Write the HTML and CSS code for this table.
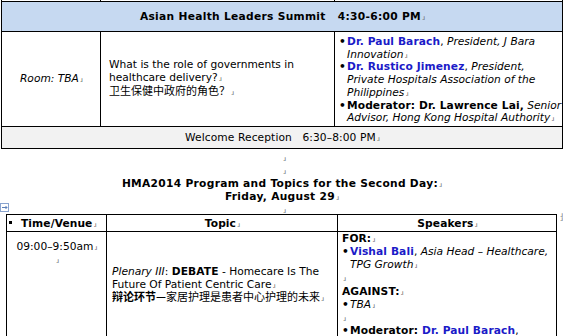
FILE: index.html
```html
<!DOCTYPE html>
<html>
<head>
<meta charset="utf-8">
<link rel="stylesheet" href="styles.css">
</head>
<body>
<div class="page">
  <table class="t1">
    <colgroup><col class="a1"><col class="a2"><col class="a3"></colgroup>
    <tr class="stub"><td></td><td></td><td></td></tr>
    <tr class="head"><td colspan="3">Asian Health Leaders Summit&nbsp;&nbsp; 4:30-6:00 PM<span class="pm">.ı</span></td></tr>
    <tr class="r2">
      <td class="room"><i>Room: TBA</i><span class="pm">.ı</span></td>
      <td class="q">What is the role of governments in<br>healthcare delivery?<span class="pm">.ı</span><br><span class="cjk">卫生保健中政府的角色？</span><span class="pm">.ı</span></td>
      <td class="spk">
        <div class="li"><span class="bul">•</span><span><b class="lnk">Dr. Paul Barach</b>, <i>President, J Bara<br>Innovation</i><span class="pm">.ı</span></span></div>
        <div class="li"><span class="bul">•</span><span><b class="lnk">Dr. Rustico Jimenez</b>, <i>President,<br>Private Hospitals Association of the<br>Philippines</i><span class="pm">.ı</span></span></div>
        <div class="li"><span class="bul">•</span><span><b>Moderator: Dr. Lawrence Lai,</b> <i>Senior<br>Advisor, Hong Kong Hospital Authority</i><span class="pm">.ı</span></span></div>
      </td>
    </tr>
    <tr class="welcome"><td colspan="3">Welcome Reception&nbsp;&nbsp; 6:30–8:00 PM<span class="pm">.ı</span></td></tr>
  </table>

  <div class="mid">
    <p><span class="pm">.ı</span></p>
    <p><span class="pm">.ı</span></p>
    <p><b>HMA2014 Program and Topics for the Second Day:</b><span class="pm">.ı</span></p>
    <p><b>Friday, August 29</b><span class="pm">.ı</span></p>
    <p><span class="pm">.ı</span></p>
  </div>

  <div class="t2wrap">
    <svg class="handle" width="9" height="9" viewBox="0 0 9 9">
      <rect x="0.5" y="0.5" width="8" height="8" fill="#fff" stroke="#8aa4cf"/>
      <path d="M2 4.5H7M5.5 3L7 4.5L5.5 6" fill="none" stroke="#5c7fb8" stroke-width="1"/>
    </svg>
    <div class="t2row">
      <table class="t2">
        <colgroup><col class="b1"><col class="b2"><col class="b3"></colgroup>
        <tr class="h2">
          <td class="tv"><span class="sq"></span><b>Time/Venue</b><span class="pm">.ı</span></td>
          <td class="ctr"><b>Topic</b><span class="pm">.ı</span></td>
          <td class="ctr"><b>Speakers</b><span class="pm">.ı</span></td>
        </tr>
        <tr class="r3">
          <td class="time">09:00–9:50am<span class="pm">.ı</span><br><span class="pm">.ı</span></td>
          <td class="deb"><i>Plenary III</i>: <b>DEBATE</b> - Homecare Is The<br>Future Of Patient Centric Care<span class="pm">.ı</span><br><span class="cjk"><b>辩论环节—</b>家居护理是患者中心护理的未来</span><span class="pm">.ı</span></td>
          <td class="spk2">
            <div><b>FOR:</b><span class="pm">.ı</span></div>
            <div class="li"><span class="bul">•</span><span><b class="lnk">Vishal Bali</b>, <i>Asia Head – Healthcare,<br>TPG Growth</i><span class="pm">.ı</span></span></div>
            <div class="gap1"><span class="pm">.ı</span></div>
            <div><b>AGAINST:</b><span class="pm">.ı</span></div>
            <div class="li"><span class="bul">•</span><span><i>TBA</i><span class="pm">.ı</span></span></div>
            <div class="gap2"><span class="pm">.ı</span></div>
            <div class="li"><span class="bul">•</span><span><b>Moderator: <span class="lnk">Dr. Paul Barach</span></b>,</span></div>
          </td>
        </tr>
      </table>
      <div class="rowmarks"><span class="pm">.ı</span><span class="pm">.ı</span></div>
    </div>
  </div>
</div>
</body>
</html>
```

FILE: styles.css
```css
* { box-sizing: border-box; }
html, body { margin: 0; padding: 0; background: #fff; }
body {
  font-family: "DejaVu Sans", Verdana, "Noto Sans CJK SC", sans-serif;
  font-size: 10.67px;
  color: #000;
  overflow: hidden;
  width: 563px;
  height: 336px;
}
.page { width: 563px; }
table { border-collapse: collapse; table-layout: fixed; }
td { border: 1px solid #000; padding: 0; vertical-align: top; }
b { letter-spacing: 0.1px; }
.head b, .head td, .mid b { letter-spacing: 0.3px; }
.cjk { font-family: "Noto Sans CJK SC", sans-serif; font-size: 11px; line-height: 1; letter-spacing: 0; }
.cjk b { letter-spacing: 0; }
.pm { font-size: 7px; line-height: 0; color: #666; letter-spacing: -1px; margin-left: 1px; font-weight: normal; font-style: normal; }
.lnk { color: #1b1bc8; }
.li { display: flex; }
.bul { width: 8px; flex: none; font-weight: bold; }

/* top table */
.t1 { margin: -10px 0 0 1px; width: 561px; }
.a1 { width: 99px; }
.a2 { width: 234px; }
.a3 { width: 228px; }
.stub td { height: 11px; }
.head td { height: 30px; background: #c6d9f1; text-align: center; vertical-align: middle; font-weight: bold; }
.r2 td { height: 95px; line-height: 12.7px; }
.room { text-align: center; vertical-align: middle !important; }
.q { vertical-align: middle !important; padding-left: 8px !important; }
.spk { padding: 4px 0 0 4px !important; white-space: nowrap; }
.welcome td { height: 22px; background: #f2f2f2; text-align: center; vertical-align: middle; letter-spacing: 0.1px; }

/* middle paragraphs */
.mid { padding-top: 2px; text-align: center; line-height: 13px; }
.mid p { margin: 0; height: 13px; }
.mid p:last-child { height: 11px; }
.mid p:first-child, .mid p:nth-child(2), .mid p:last-child { padding-left: 4px; }

/* second table */
.t2wrap { display: flex; align-items: flex-start; }
.handle { flex: none; margin: -11px -4px 0 0; }
.t2row { display: flex; align-items: flex-start; }
.t2 { width: 550px; margin-left: 1px; }
.b1 { width: 100px; }
.b2 { width: 231px; }
.b3 { width: 219px; }
.h2 td { height: 17px; vertical-align: middle; }
.tv { padding-left: 2px !important; }
.sq { display: inline-block; width: 3px; height: 3px; background: #000; margin: 0 9px 2px 0; vertical-align: middle; }
.ctr { text-align: center; }
.r3 td { height: 110px; line-height: 13px; }
.time { text-align: center; padding-top: 8px !important; }
.deb { padding: 33px 0 0 5px !important; white-space: nowrap; }
.spk2 { padding: 0 0 0 4px !important; white-space: nowrap; }
.gap1 { height: 14px; }
.gap2 { height: 13px; }
.rowmarks { display: flex; flex-direction: column; padding: 1px 0 0 2px; line-height: 13px; gap: 4px; }
```
